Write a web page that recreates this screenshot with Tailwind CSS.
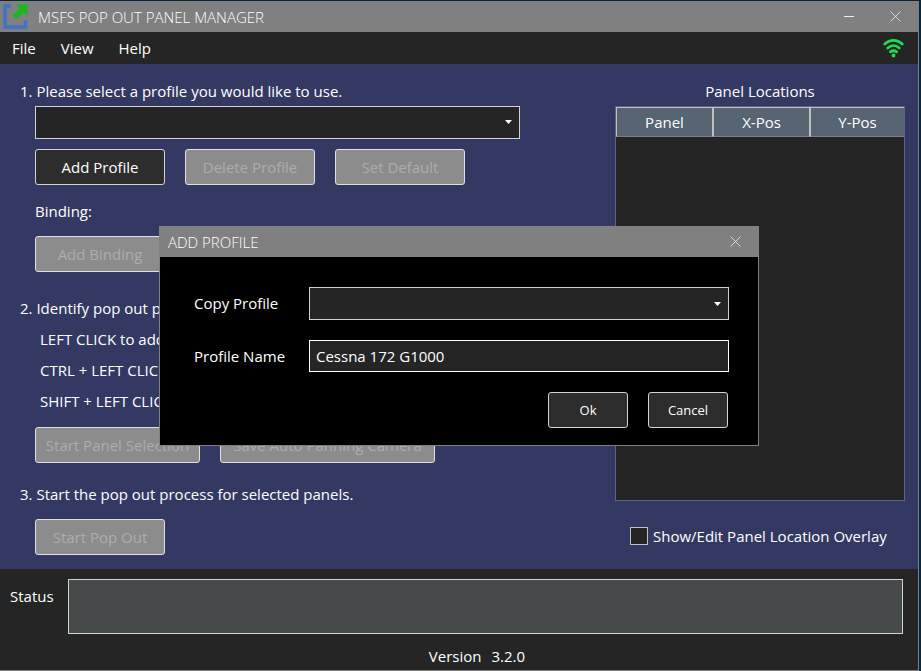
<!DOCTYPE html>
<html lang="en">
<head>
<meta charset="utf-8">
<title>MSFS Pop Out Panel Manager</title>
<script src="https://cdn.jsdelivr.net/npm/@tailwindcss/browser@4"></script>
</head>
<body class="min-h-screen bg-[#06263a] pt-px pr-[2px] font-['Open_Sans','Noto_Sans',sans-serif] text-[15px] leading-6 text-white">
<div class="relative flex min-h-[calc(100vh-1px)] flex-col border-r border-b border-[#808080] bg-[#252525]">

  <header class="flex h-[31px] items-center bg-[#808080]">
    <svg class="ml-[3px] size-[25px]" viewBox="0 0 25 25" aria-hidden="true">
      <path d="M8 2H2v21h20.500v-6.500" fill="none" stroke="#3f72c8" stroke-width="3.500"/>
      <path d="M12.500 .5H24.500V12L20.500 8.500L13.500 15L9.500 11.500L16.500 4.500z" fill="#16b81c"/>
    </svg>
    <h1 class="ml-[10px] text-[15px] font-light">MSFS POP OUT PANEL MANAGER</h1>
    <button type="button" aria-label="Minimize" class="ml-auto flex h-full w-[46px] items-center justify-center">
      <svg class="size-[11px]" viewBox="0 0 11 11"><path d="M0 5.500h10" stroke="#eee"/></svg>
    </button>
    <button type="button" aria-label="Close" class="flex h-full w-[46px] items-center justify-center">
      <svg class="size-[11px]" viewBox="0 0 11 11"><path d="M.5 .5l10 10M10.500 .5l-10 10" stroke="#eee" stroke-width=".8"/></svg>
    </button>
  </header>

  <nav class="flex h-8 items-center gap-[25px] pl-3">
    <button type="button">File</button>
    <button type="button">View</button>
    <button type="button">Help</button>
    <svg class="mr-[14px] ml-auto h-5 w-[21px]" viewBox="0 0 21 20" fill="none" stroke="#1fdb4f" stroke-width="2.800" stroke-linecap="round" role="img" aria-label="Connected">
      <path d="M1.800 6C7 1.200 14 1.200 19.200 6M4.800 10c3.500-3.200 7.900-3.200 11.400 0M7.400 13.800c2-1.400 4.200-1.400 6.200 0"/>
      <circle cx="10.500" cy="17.500" r="1.900" fill="#1fdb4f" stroke="none"/>
    </svg>
  </nav>

  <main class="flex flex-1 justify-between bg-[#333963] pt-[15px] pr-[13px] pb-[13px] pl-5">
    <div class="w-[500px]">
      <label for="profile">1. Please select a profile you would like to use.</label>
      <div class="relative mt-[3px] ml-[15px]">
        <select id="profile" class="block h-[33px] w-full appearance-none border border-[#d2d2d2] bg-[#252525] px-[6px]"></select>
        <svg class="pointer-events-none absolute top-[14px] right-2 h-1 w-[7px]" viewBox="0 0 7 4"><path d="M0 0h7L3.500 4z" fill="#fff"/></svg>
      </div>
      <div class="mt-[10px] ml-[15px] flex gap-5">
        <button type="button" class="h-9 w-[130px] rounded-[3px] border border-[#d2d2d2] bg-[#2d2d2d]">Add Profile</button>
        <button type="button" disabled class="h-9 w-[130px] rounded-[3px] border border-[#e0e0e0] bg-[#8c8c8c] text-[#adadad]">Delete Profile</button>
        <button type="button" disabled class="h-9 w-[130px] rounded-[3px] border border-[#e0e0e0] bg-[#8c8c8c] text-[#adadad]">Set Default</button>
      </div>
      <p class="mt-[14px] ml-[15px]">Binding:</p>
      <button type="button" disabled class="mt-[13px] ml-[15px] block h-9 w-[130px] rounded-[3px] border border-[#e0e0e0] bg-[#8c8c8c] text-[#adadad]">Add Binding</button>

      <h2 class="mt-6">2. Identify pop out panels</h2>
      <div class="mt-1 ml-5 leading-[31px]">
        <p>LEFT CLICK to add</p>
        <p>CTRL + LEFT CLICK</p>
        <p>SHIFT + LEFT CLICK</p>
      </div>
      <div class="mt-[10px] ml-[15px] flex gap-5">
        <button type="button" disabled class="h-9 w-[165px] rounded-[3px] border border-[#e0e0e0] bg-[#8c8c8c] text-[#adadad]">Start Panel Selection</button>
        <button type="button" disabled class="h-9 w-[215px] rounded-[3px] border border-[#e0e0e0] bg-[#8c8c8c] text-[#adadad]">Save Auto Panning Camera</button>
      </div>

      <h2 class="mt-[19px]">3. Start the pop out process for selected panels.</h2>
      <button type="button" disabled class="mt-[13px] ml-[15px] block h-9 w-[130px] rounded-[3px] border border-[#e0e0e0] bg-[#8c8c8c] text-[#adadad]">Start Pop Out</button>
    </div>

    <div class="flex w-[290px] flex-col">
      <h2 class="text-center">Panel Locations</h2>
      <div class="mt-[3px] h-[395px] border border-[#5a6684] bg-[#252525]">
        <table class="w-full table-fixed border-separate border-spacing-0">
          <thead>
            <tr class="h-[30px] bg-[#576573]">
              <th class="w-[97px] border-t border-r border-b border-l border-[#c0c0c0] border-b-[#808080] p-0 font-normal">Panel</th>
              <th class="w-[97px] border-t border-r border-b border-l border-[#c0c0c0] border-b-[#808080] p-0 font-normal">X-Pos</th>
              <th class="border-t border-b border-l border-[#c0c0c0] border-b-[#808080] p-0 font-normal">Y-Pos</th>
            </tr>
          </thead>
        </table>
      </div>
      <div class="mt-[23px] ml-[15px] flex items-center gap-[5px]">
        <input id="overlay" type="checkbox" class="size-[18px] appearance-none border border-[#c0c0c0] bg-[#252525]">
        <label for="overlay">Show/Edit Panel Location Overlay</label>
      </div>
    </div>
  </main>

  <footer class="pt-[10px] pb-[2px]">
    <div class="flex pr-[15px] pl-[10px]">
      <label for="status" class="mt-[5px] w-[58px]">Status</label>
      <textarea id="status" readonly class="block h-[55px] flex-1 resize-none border border-[#d2d2d2] bg-[#464a4b]"></textarea>
    </div>
    <p class="mt-[10px] flex justify-center gap-[10px] pl-9"><span>Version</span><span>3.2.0</span></p>
  </footer>

  <div class="absolute inset-0 flex items-center justify-center">
    <section role="dialog" aria-labelledby="dialog-title" class="w-[600px] border border-[#808080] bg-black">
      <div class="flex h-[30px] items-center bg-[#808080] pl-2">
        <h2 id="dialog-title" class="font-light">ADD PROFILE</h2>
        <button type="button" aria-label="Close dialog" class="ml-auto flex h-full w-[46px] items-center justify-center">
          <svg class="size-[11px]" viewBox="0 0 11 11"><path d="M.5 .5l10 10M10.500 .5l-10 10" stroke="#eee" stroke-width=".8"/></svg>
        </button>
      </div>
      <form class="pt-[30px] pr-[29px] pb-[17px] pl-[34px]">
        <div class="flex items-center">
          <label for="copy" class="w-[115px]">Copy Profile</label>
          <div class="relative flex-1">
            <select id="copy" class="block h-[33px] w-full appearance-none border border-[#d2d2d2] bg-[#252525] px-[6px]"></select>
            <svg class="pointer-events-none absolute top-[15px] right-2 h-1 w-[7px]" viewBox="0 0 7 4"><path d="M0 0h7L3.500 4z" fill="#fff"/></svg>
          </div>
        </div>
        <div class="mt-5 flex items-center">
          <label for="name" class="w-[115px]">Profile Name</label>
          <input id="name" type="text" value="Cessna 172 G1000" class="h-8 min-w-0 flex-1 border border-white bg-[#252525] px-[6px]">
        </div>
        <div class="mt-5 flex justify-end gap-5 pr-px text-[13px]">
          <button type="button" class="h-9 w-20 rounded-[3px] border border-[#d2d2d2] bg-[#2d2d2d]">Ok</button>
          <button type="button" class="h-9 w-20 rounded-[3px] border border-[#d2d2d2] bg-[#2d2d2d]">Cancel</button>
        </div>
      </form>
    </section>
  </div>
</div>
</body>
</html>
